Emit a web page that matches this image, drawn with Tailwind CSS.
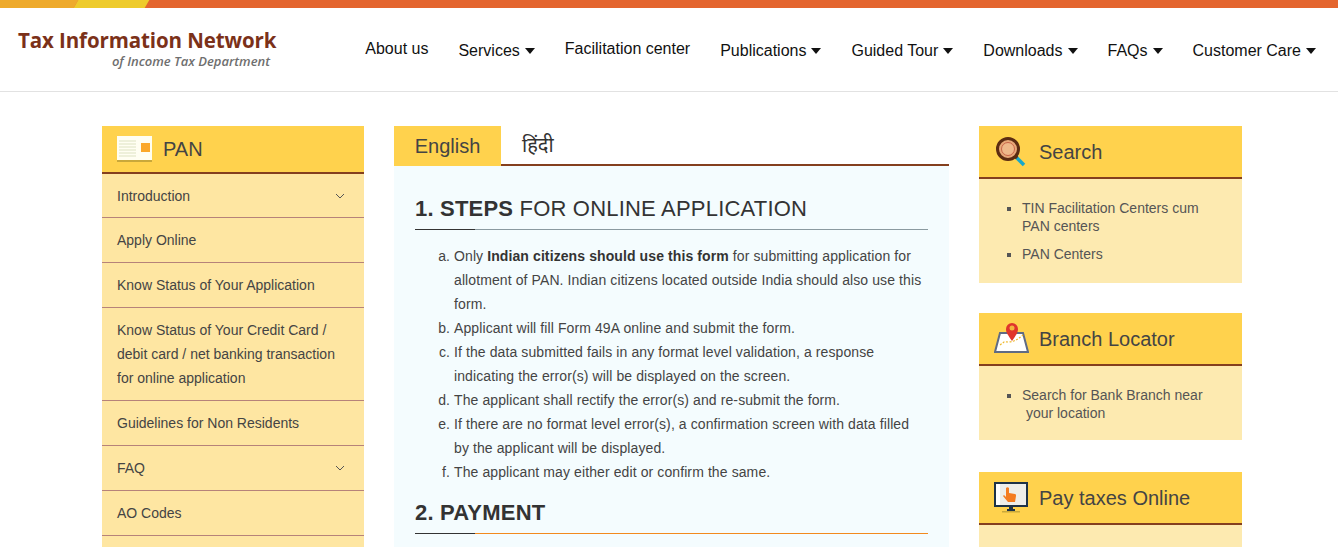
<!DOCTYPE html>
<html lang="en">
<head>
<meta charset="utf-8">
<title>Tax Information Network</title>
<script src="https://cdn.jsdelivr.net/npm/@tailwindcss/browser@4"></script>
</head>
<body class="bg-white font-['Liberation_Sans',Arial,sans-serif] h-[547px] overflow-hidden">
<div class="flex h-2 overflow-hidden bg-[#e4652e]">
  <div class="w-[80px] bg-[#eeaa2c] -skew-x-[30deg] -ml-4 pl-4 w-[92px]"></div>
  <div class="w-[71px] bg-[#eecb2c] -skew-x-[30deg]"></div>
</div>
<header class="h-[84px] border-b border-[#e2e2e2] flex justify-between">
  <div class="pl-[18px] pt-[19px] w-[270px]">
    <div class="font-['Open_Sans',sans-serif] font-bold text-[20.5px] leading-[26px] text-[#7b3119] whitespace-nowrap tracking-[-0.1px]">Tax Information Network</div>
    <div class="font-['Open_Sans',sans-serif] font-semibold italic text-[13px] leading-[16px] text-[#6f6f6f] text-right whitespace-nowrap pr-[0px]">of Income Tax Department</div>
  </div>
  <nav class="flex gap-[30px] pr-[22px] pt-[30px] text-[16px] leading-[22px] text-[#111] whitespace-nowrap">
    <a>About us</a>
    <a class="flex items-center gap-[5px] pt-[2px] h-[24px]">Services<span class="mt-[-1px] border-x-[5px] border-t-[6px] border-x-transparent border-t-[#111]"></span></a>
    <a>Facilitation center</a>
    <a class="flex items-center gap-[5px] pt-[2px] h-[24px]">Publications<span class="mt-[-1px] border-x-[5px] border-t-[6px] border-x-transparent border-t-[#111]"></span></a>
    <a class="flex items-center gap-[5px] pt-[2px] h-[24px]">Guided Tour<span class="mt-[-1px] border-x-[5px] border-t-[6px] border-x-transparent border-t-[#111]"></span></a>
    <a class="flex items-center gap-[5px] pt-[2px] h-[24px]">Downloads<span class="mt-[-1px] border-x-[5px] border-t-[6px] border-x-transparent border-t-[#111]"></span></a>
    <a class="flex items-center gap-[5px] pt-[2px] h-[24px]">FAQs<span class="mt-[-1px] border-x-[5px] border-t-[6px] border-x-transparent border-t-[#111]"></span></a>
    <a class="flex items-center gap-[5px] pt-[2px] h-[24px]">Customer Care<span class="mt-[-1px] border-x-[5px] border-t-[6px] border-x-transparent border-t-[#111]"></span></a>
  </nav>
</header>
<main class="flex gap-[30px] pl-[102px] pt-[34px]">
  <aside class="w-[262px] shrink-0">
    <div class="h-[48px] bg-[#ffd24d] border-b-[2px] border-[#843f1e] flex items-center pl-[15px] gap-[10px] text-[20px] text-[#444]">
      <svg width="36" height="26" viewBox="0 0 36 26" class="mt-[-1px]"><rect y="0" width="35" height="26" fill="#c9a83a"/><rect width="35" height="24" fill="#fffef2"/><g fill="#eef0da"><rect x="2" y="4" width="17" height="2"/><rect x="2" y="7" width="17" height="2"/><rect x="2" y="10" width="17" height="2"/><rect x="2" y="13" width="17" height="2"/><rect x="2" y="16" width="17" height="2"/><rect x="2" y="19" width="17" height="2"/></g><rect x="24" y="7" width="9" height="9" fill="#fba82a"/></svg>
      <span>PAN</span>
    </div>
    <ul class="bg-[#fee6a2] text-[14px] leading-[24px] text-[#444] divide-y divide-[#b6837a]">
      <li class="h-[44px] pl-[15px] pr-[19px] flex items-center justify-between">Introduction<svg width="10" height="6" viewBox="0 0 10 6" fill="none" stroke="#555" stroke-width="1"><path d="M1 1l4 4 4-4"/></svg></li>
      <li class="h-[45px] pl-[15px] flex items-center">Apply Online</li>
      <li class="h-[45px] pl-[15px] flex items-center">Know Status of Your Application</li>
      <li class="pl-[15px] pr-[20px] py-[10px]">Know Status of Your Credit Card / debit card / net banking transaction for online application</li>
      <li class="h-[45px] pl-[15px] flex items-center">Guidelines for Non Residents</li>
      <li class="h-[45px] pl-[15px] pr-[19px] flex items-center justify-between">FAQ<svg width="10" height="6" viewBox="0 0 10 6" fill="none" stroke="#555" stroke-width="1"><path d="M1 1l4 4 4-4"/></svg></li>
      <li class="h-[45px] pl-[15px] flex items-center">AO Codes</li>
      <li class="h-[45px]"></li>
    </ul>
  </aside>
  <section class="w-[555px] shrink-0">
    <div class="flex h-[40px] border-b-[2px] border-[#843f1e] text-[20px] text-[#444]">
      <div class="w-[107px] h-[40px] bg-[#ffd24d] flex items-center justify-center">English</div>
      <div class="pl-[21px] h-[38px] flex items-center font-['Noto_Sans','DejaVu_Sans',sans-serif] text-[#333]">हिंदी</div>
    </div>
    <div class="bg-[#f4fcfe] px-[21px] pt-[29px] h-[400px] text-[#333]">
      <h2 class="text-[22px] leading-[28px] pb-[6px] border-b border-[#8a9aa0] relative tracking-[0.2px]"><b>1. STEPS</b> FOR ONLINE APPLICATION<span class="absolute left-0 -bottom-px w-[60px] h-px bg-[#333]"></span></h2>
      <ol class="list-[lower-alpha] pl-[39px] pt-[14px] pb-[15px] text-[14px] leading-[24px] text-[#444] tracking-[0.1px]">
        <li>Only <b class="text-[#333]">Indian citizens should use this form</b> for submitting application for allotment of PAN. Indian citizens located outside India should also use this form.</li>
        <li>Applicant will fill Form 49A online and submit the form.</li>
        <li>If the data submitted fails in any format level validation, a response indicating the error(s) will be displayed on the screen.</li>
        <li>The applicant shall rectify the error(s) and re-submit the form.</li>
        <li>If there are no format level error(s), a confirmation screen with data filled by the applicant will be displayed.</li>
        <li>The applicant may either edit or confirm the same.</li>
      </ol>
      <h2 class="text-[22px] leading-[28px] pb-[6px] border-b border-[#f28a1e] relative font-bold tracking-[0.2px]">2. PAYMENT<span class="absolute left-0 -bottom-px w-[60px] h-px bg-[#333]"></span></h2>
    </div>
  </section>
  <aside class="w-[263px] shrink-0 flex flex-col gap-[30px]">
    <div>
      <div class="h-[53px] bg-[#ffd24d] border-b-[2px] border-[#843f1e] flex items-center pl-[17px] gap-[12px] text-[20px] text-[#444]">
        <svg width="31" height="31" viewBox="0 0 31 31"><circle cx="12" cy="13" r="10.5" fill="#e8a878" stroke="#5c2c12" stroke-width="3"/><circle cx="12" cy="13" r="6.5" fill="#efb98a" stroke="#c8664a" stroke-width="1"/><path d="M20 21l8 8" stroke="#17a8cc" stroke-width="3.5"/><path d="M19 20l2 2" stroke="#5c2c12" stroke-width="3.5"/></svg>
        <span>Search</span>
      </div>
      <ul class="bg-[#fdeab0] h-[104px] pl-[43px] pr-[30px] pt-[20px] text-[14px] leading-[18px] text-[#555] list-[square]">
        <li class="mb-[10px]">TIN Facilitation Centers cum PAN centers</li>
        <li>PAN Centers</li>
      </ul>
    </div>
    <div>
      <div class="h-[53px] bg-[#ffd24d] border-b-[2px] border-[#843f1e] flex items-center pl-[15px] gap-[10px] text-[20px] text-[#444]">
        <svg width="35" height="32" viewBox="0 0 35 32" class="mt-[-3px]"><path d="M6 12h23l5 19H1z" fill="#fff" stroke="#5f6b84" stroke-width="2"/><path d="M6 24c6-4 2-3 8-3s10-3 15-7" fill="none" stroke="#efb92e" stroke-width="1.2" stroke-dasharray="2 1.5"/><path d="M18 20c-4-6-6-8-6-12a6 6 0 0 1 12 0c0 4-2 6-6 12z" fill="#e0342c"/><circle cx="18" cy="7" r="2.5" fill="#f3b53c"/></svg>
        <span>Branch Locator</span>
      </div>
      <ul class="bg-[#fdeab0] h-[74px] pl-[43px] pr-[30px] pt-[20px] text-[14px] leading-[18px] text-[#555] list-[square]">
        <li>Search for Bank Branch near<br>&nbsp;your location</li>
      </ul>
    </div>
    <div class="mt-[2px]">
      <div class="h-[53px] bg-[#ffd24d] border-b-[2px] border-[#843f1e] flex items-center pl-[15px] gap-[10px] text-[20px] text-[#444]">
        <svg width="35" height="31" viewBox="0 0 35 31" class="mt-[-1px]"><rect x="1" y="1" width="32" height="23" fill="#eeeeea" stroke="#1e3348" stroke-width="2"/><rect x="2" y="2" width="4" height="21" fill="#fff"/><path d="M13 27h8v2h-8zM15 24h4v3h-4z" fill="#1e3348"/><rect x="8" y="29" width="18" height="1.5" fill="#c9a83a"/><path d="M12 6c1-1 2-1 3 0v5l6 1c1 0 1 1 1 2l-1 6h-7l-5-6 1-1 2 2z" fill="#f47c20"/></svg>
        <span>Pay taxes Online</span>
      </div>
      <div class="bg-[#fdeab0] h-[60px]"></div>
    </div>
  </aside>
</main>
</body>
</html>
